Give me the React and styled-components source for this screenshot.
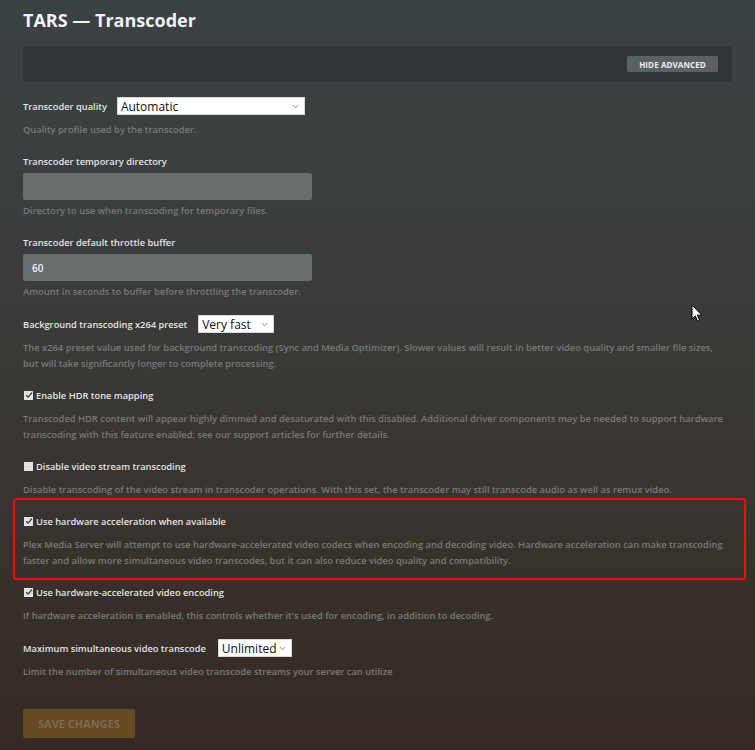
import React from 'react';
import styled, { createGlobalStyle } from 'styled-components';

const GlobalStyle = createGlobalStyle`
  html, body { margin: 0; padding: 0; }
  body {
    font-family: "Open Sans", "Liberation Sans", sans-serif;
    background: #373533;
  }
`

const Page = styled.div`
  position: relative;
  min-height: 750px;
  box-sizing: border-box;
  padding: 8px 23px 12px;
  background: linear-gradient(180deg, #3b4244 0%, #3b3d3c 35%, #38332e 70%, #352a23 100%);
  overflow: hidden;
`

const Title = styled.h1`
  margin: 0 0 14px;
  font-size: 18px;
  line-height: 24px;
  font-weight: 700;
  color: #f2f2f2;
`

const AdvancedBar = styled.div`
  height: 36px;
  display: flex;
  align-items: center;
  justify-content: flex-end;
  padding-right: 14px;
  background: rgba(30, 35, 35, 0.35);
`

const SmallButton = styled.button`
  height: 16px;
  width: 91px;
  border: 0;
  border-radius: 2px;
  background: #5b6062;
  color: #eeeeee;
  font-family: inherit;
  font-size: 8px;
  font-weight: 700;
  letter-spacing: 0.1px;
  padding: 0;
`

const Settings = styled.div`
  display: flex;
  flex-direction: column;
  gap: 14px;
  margin-top: 14px;
`

const Setting = styled.div`
  display: flex;
  flex-direction: column;
`

const Highlight = styled.div`
  margin: -14px -14px -11px -10px;
  padding: 12px 12px 9px 8px;
  border: 2px solid #f20d0d;
  border-radius: 3px;
`

const Row = styled.div`
  display: flex;
  align-items: center;
  height: ${p => p.$h || 18}px;
  gap: ${p => p.$gap || 10}px;
`

const Label = styled.label`
  font-size: 9.3px;
  font-weight: 600;
  color: #e4e4e4;
  white-space: nowrap;
  display: flex;
  align-items: center;
  gap: 3px;
`

const Box = styled.span`
  width: 9px;
  height: 9px;
  background: #e2e2e2;
  display: inline-flex;
  align-items: center;
  justify-content: center;
  margin-left: 1px;
`

const Select = styled.div`
  box-sizing: border-box;
  width: ${p => p.$w}px;
  height: 18px;
  background: #ffffff;
  border: 1px solid #d8d8d8;
  display: flex;
  align-items: center;
  justify-content: space-between;
  padding: 0 5px 0 3px;
  font-size: 12px;
  font-weight: 500;
  color: #111;
`

const Input = styled.div`
  box-sizing: border-box;
  width: 289px;
  height: 27px;
  margin-top: 3px;
  border-radius: 2px;
  background: #686d6d;
  padding-left: 9px;
  display: flex;
  align-items: center;
  font-size: 10px;
  font-weight: 600;
  color: #eeeeee;
`

const Help = styled.p`
  margin: ${p => p.$mt}px 0 0;
  font-size: 9.35px;
  line-height: 16px;
  font-weight: 600;
  color: #787a78;
  white-space: nowrap;
`

const SaveButton = styled.button`
  margin-top: 29px;
  width: 112px;
  height: 29px;
  border: 0;
  border-radius: 2px;
  background: #654a22;
  color: #7c6d58;
  font-family: inherit;
  font-size: 11px;
  font-weight: 700;
  padding: 0;
`

const Cursor = styled.svg`
  position: absolute;
  left: 691px;
  top: 304px;
`

const Chevron = () => (
  <svg width="7" height="5" viewBox="0 0 7 5">
    <path d="M0.8 1 L3.5 3.8 L6.2 1" fill="none" stroke="#8a8a8a" strokeWidth="1" />
  </svg>
)

const Check = ({ on }) => (
  <Box>
    {on && (
      <svg width="8" height="8" viewBox="0 0 8 8">
        <path d="M1.2 4.2 L3.1 6.1 L6.9 1.6" fill="none" stroke="#333" strokeWidth="1.3" />
      </svg>
    )}
  </Box>
)

const CheckSetting = ({ on, label, children }) => (
  <Setting>
    <Row>
      <Label><Check on={on} />{label}</Label>
    </Row>
    <Help $mt={7}>{children}</Help>
  </Setting>
)

const App = () => (
  <Page>
    <GlobalStyle />
    <Title>TARS — Transcoder</Title>
    <AdvancedBar>
      <SmallButton>HIDE ADVANCED</SmallButton>
    </AdvancedBar>

    <Settings>
      <Setting>
        <Row $h={20}>
          <Label>Transcoder quality</Label>
          <Select $w={188}>Automatic<Chevron /></Select>
        </Row>
        <Help $mt={6}>Quality profile used by the transcoder.</Help>
      </Setting>

      <Setting>
        <Row><Label>Transcoder temporary directory</Label></Row>
        <Input />
        <Help $mt={3}>Directory to use when transcoding for temporary files.</Help>
      </Setting>

      <Setting>
        <Row><Label>Transcoder default throttle buffer</Label></Row>
        <Input>60</Input>
        <Help $mt={3}>Amount in seconds to buffer before throttling the transcoder.</Help>
      </Setting>

      <Setting>
        <Row $h={20} $gap={11}>
          <Label>Background transcoding x264 preset</Label>
          <Select $w={76}>Very fast<Chevron /></Select>
        </Row>
        <Help $mt={6}>
          The x264 preset value used for background transcoding (Sync and Media Optimizer). Slower values will result in better video quality and smaller file sizes,
          <br />but will take significantly longer to complete processing.
        </Help>
      </Setting>

      <CheckSetting on label="Enable HDR tone mapping">
        Transcoded HDR content will appear highly dimmed and desaturated with this disabled. Additional driver components may be needed to support hardware
        <br />transcoding with this feature enabled; see our support articles for further details.
      </CheckSetting>

      <CheckSetting label="Disable video stream transcoding">
        Disable transcoding of the video stream in transcoder operations. With this set, the transcoder may still transcode audio as well as remux video.
      </CheckSetting>

      <Highlight>
        <CheckSetting on label="Use hardware acceleration when available">
          Plex Media Server will attempt to use hardware-accelerated video codecs when encoding and decoding video. Hardware acceleration can make transcoding
          <br />faster and allow more simultaneous video transcodes, but it can also reduce video quality and compatibility.
        </CheckSetting>
      </Highlight>

      <CheckSetting on label="Use hardware-accelerated video encoding">
        If hardware acceleration is enabled, this controls whether it's used for encoding, in addition to decoding.
      </CheckSetting>

      <Setting>
        <Row $h={20} $gap={12}>
          <Label>Maximum simultaneous video transcode</Label>
          <Select $w={74}>Unlimited<Chevron /></Select>
        </Row>
        <Help $mt={6}>Limit the number of simultaneous video transcode streams your server can utilize</Help>
      </Setting>
    </Settings>

    <SaveButton>SAVE CHANGES</SaveButton>

    <Cursor width="12" height="19" viewBox="0 0 12 19">
      <path d="M1 1 L1 15 L4.3 11.9 L6.6 17.2 L8.6 16.3 L6.4 11.2 L10.8 11.2 Z" fill="#fff" stroke="#000" strokeWidth="1" />
    </Cursor>
  </Page>
)

export default App
